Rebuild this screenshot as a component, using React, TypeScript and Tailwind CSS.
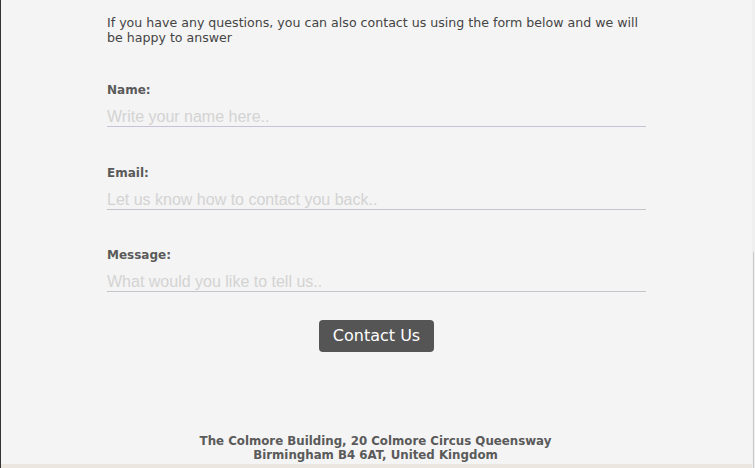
export default function App() {
  const fields = [
    { label: "Name:", placeholder: "Write your name here..", line: "border-[#c6c3d8]" },
    { label: "Email:", placeholder: "Let us know how to contact you back..", line: "border-[#c4c4cb]" },
    { label: "Message:", placeholder: "What would you like to tell us..", line: "border-[#c4c4cb]" },
  ];

  return (
    <div className="flex h-[468px] overflow-hidden bg-[#f4f4f4] font-['DejaVu_Sans',sans-serif]">
      <main className="flex-1 flex flex-col border-l border-[#333333]">
        <section className="w-[539px] ml-[106px] pt-[16px]">
          <p className="text-[12.6px] leading-[14.5px] text-[#444444]">
            If you have any questions, you can also contact us using the form below and we will be happy to answer
          </p>

          <form className="mt-[37px] flex flex-col">
            {fields.map((f) => (
              <div key={f.label} className="flex flex-col mb-[37.5px]">
                <label className="text-[12px] leading-[16px] font-semibold text-[#5a5a5a]">{f.label}</label>
                <input
                  type="text"
                  placeholder={f.placeholder}
                  className={`mt-[10px] w-full h-[19px] bg-transparent border-b ${f.line} font-['Liberation_Sans',Arial,sans-serif] text-[16px] leading-[18px] text-[#333] placeholder:text-[#d3d3d3] outline-none`}
                />
              </div>
            ))}
            <div className="flex justify-center -mt-[10px]">
              <button
                type="button"
                className="w-[115px] h-[32px] rounded-[4px] bg-[#555555] text-white text-[16px] leading-[20px]"
              >
                Contact Us
              </button>
            </div>
          </form>
        </section>

        <footer className="mt-[82px] text-center text-[11.8px] leading-[14.5px] font-semibold text-[#5a5a5a] pr-[2px]">
          <p>The Colmore Building, 20 Colmore Circus Queensway</p>
          <p>Birmingham B4 6AT, United Kingdom</p>
        </footer>
        <div className="mt-[1px] h-[20px] bg-[#ebe6df]" />
      </main>
      <div className="w-[3px] bg-[#efefef] flex flex-col">
        <div className="h-[252px]" />
        <div className="flex-1 w-[1px] ml-[1px] bg-[#c8c8c8]" />
      </div>
    </div>
  );
}
